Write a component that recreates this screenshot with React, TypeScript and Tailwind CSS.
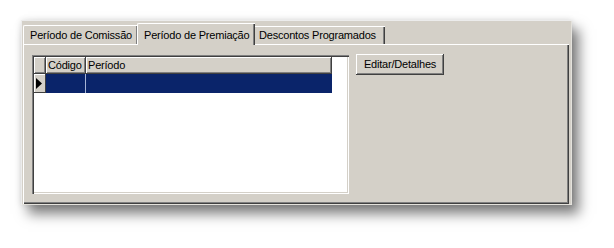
import React from "react";

const raised =
  "shadow-[inset_-1px_-1px_#404040,inset_1px_1px_#ffffff,inset_-2px_-2px_#808080]";

export default function App() {
  return (
    <div
      className="w-[614px] h-[248px] bg-white pl-[21px] pt-[20px]"
      style={{ fontFamily: '"Liberation Sans", Arial, sans-serif' }}
    >
      <div className="w-[551px] h-[185px] bg-[#d4d0c8] shadow-[inset_1px_1px_#ececec,inset_-1px_-1px_#e4e2dc,7px_9px_12px_rgba(0,0,0,0.5),0_0_6px_rgba(0,0,0,0.12)] pl-[2px] pt-[1px] text-[11px] tracking-[-0.2px] text-black">
        {/* Tab row */}
        <div className="flex items-end h-[23px] relative z-10">
          <div className="w-[114px] h-[19px] flex items-center pl-[6px] border-l border-t border-white rounded-tl-[2px] shadow-[inset_-1px_0_#808080] whitespace-nowrap">
            Período de Comissão
          </div>
          <div className="w-[118px] h-[22px] -mb-[1px] bg-[#d4d0c8] flex items-start pt-[3px] pl-[6px] border-l border-t border-white rounded-tl-[2px] shadow-[inset_-1px_0_#404040,inset_-2px_0_#808080] whitespace-nowrap">
            Período de Premiação
          </div>
          <div className="w-[130px] h-[18px] flex items-center pl-[4px] border-t border-white shadow-[inset_-1px_0_#404040,inset_-2px_0_#808080] whitespace-nowrap">
            Descontos Programados
          </div>
        </div>
        {/* Panel */}
        <div className="w-[546px] h-[160px] bg-[#d4d0c8] shadow-[inset_1px_1px_#ffffff,inset_-1px_-1px_#404040,inset_-2px_-2px_#808080] flex items-start pl-[9px] pt-[11px] gap-[7px]">
          {/* Grid */}
          <div className="w-[317px] h-[139px] bg-white shadow-[inset_1px_1px_#808080,inset_2px_2px_#404040,inset_-1px_-1px_#ffffff,inset_-2px_-2px_#d4d0c8] p-[2px]">
            <div className="flex h-[17px]">
              <div className={`w-[12px] h-full bg-[#d4d0c8] ${raised}`} />
              <div className={`w-[40px] h-full bg-[#d4d0c8] ${raised} pl-[2px] flex items-center`}>
                Código
              </div>
              <div className={`w-[246px] h-full bg-[#d4d0c8] ${raised} pl-[2px] flex items-center`}>
                Período
              </div>
            </div>
            <div className="flex h-[19px]">
              <div className="w-[12px] h-full bg-[#d4d0c8] shadow-[inset_-1px_-1px_#404040,inset_1px_1px_#ffffff] flex items-center pl-[2px]">
                <svg width="6" height="11" viewBox="0 0 6 11">
                  <path d="M0 0 L6 5.5 L0 11 Z" fill="#000" />
                </svg>
              </div>
              <div className="w-[40px] h-full bg-[#0a246a] border-r border-[#a6b4d6]" />
              <div className="w-[246px] h-full bg-[#0a246a]" />
            </div>
          </div>
          {/* Button */}
          <button
            className={`w-[88px] h-[21px] -mt-[1px] bg-[#d4d0c8] ${raised} text-[11px] flex items-center justify-center`}
          >
            Editar/Detalhes
          </button>
        </div>
      </div>
    </div>
  );
}
